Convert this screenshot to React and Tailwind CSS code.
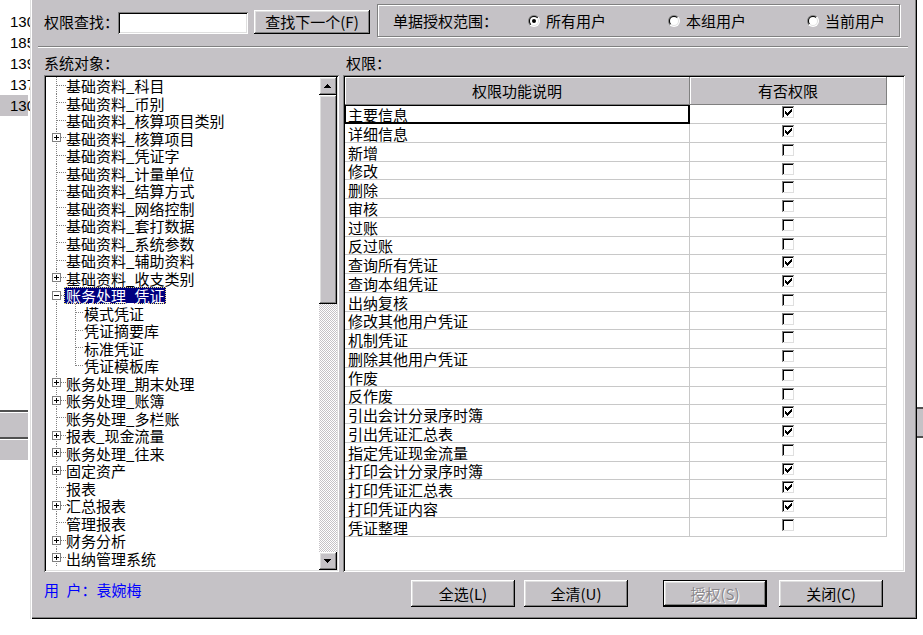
import React from 'react';

// Win98 style 3D edges
const raised = 'shadow-[inset_-1px_-1px_0_#000,inset_1px_1px_0_#fff,inset_-2px_-2px_0_#808080,inset_2px_2px_0_#dfdfdf]';
const raisedDefault = 'shadow-[inset_0_0_0_1px_#000,inset_-2px_-2px_0_#000,inset_2px_2px_0_#fff,inset_-3px_-3px_0_#808080,inset_3px_3px_0_#dfdfdf]';
const sunken = 'shadow-[inset_1px_1px_0_#808080,inset_-1px_-1px_0_#fff,inset_2px_2px_0_#000,inset_-2px_-2px_0_#dfdfdf]';

const tree = [
  { t: '基础资料_科目' },
  { t: '基础资料_币别' },
  { t: '基础资料_核算项目类别' },
  { t: '基础资料_核算项目', e: '+' },
  { t: '基础资料_凭证字' },
  { t: '基础资料_计量单位' },
  { t: '基础资料_结算方式' },
  { t: '基础资料_网络控制' },
  { t: '基础资料_套打数据' },
  { t: '基础资料_系统参数' },
  { t: '基础资料_辅助资料' },
  { t: '基础资料_收支类别', e: '+' },
  { t: '账务处理_凭证', e: '-', sel: true },
  { t: '模式凭证', child: true },
  { t: '凭证摘要库', child: true },
  { t: '标准凭证', child: true },
  { t: '凭证模板库', child: true, last: true },
  { t: '账务处理_期末处理', e: '+' },
  { t: '账务处理_账簿', e: '+' },
  { t: '账务处理_多栏账' },
  { t: '报表_现金流量', e: '+' },
  { t: '账务处理_往来', e: '+' },
  { t: '固定资产', e: '+' },
  { t: '报表' },
  { t: '汇总报表', e: '+' },
  { t: '管理报表' },
  { t: '财务分析', e: '+' },
  { t: '出纳管理系统', e: '+' },
];

const rights = [
  ['主要信息', true],
  ['详细信息', true],
  ['新增', false],
  ['修改', false],
  ['删除', false],
  ['审核', false],
  ['过账', false],
  ['反过账', false],
  ['查询所有凭证', true],
  ['查询本组凭证', true],
  ['出纳复核', false],
  ['修改其他用户凭证', false],
  ['机制凭证', false],
  ['删除其他用户凭证', false],
  ['作废', false],
  ['反作废', false],
  ['引出会计分录序时簿', true],
  ['引出凭证汇总表', true],
  ['指定凭证现金流量', false],
  ['打印会计分录序时簿', true],
  ['打印凭证汇总表', true],
  ['打印凭证内容', true],
  ['凭证整理', false],
];

const Radio = ({ id, checked }) => (
  <svg width="12" height="12" viewBox="0 0 12 12" className="shrink-0">
    <defs>
      <linearGradient id={`ro${id}`} x1="0" y1="0" x2="1" y2="1">
        <stop offset="0.5" stopColor="#808080" />
        <stop offset="0.5" stopColor="#ffffff" />
      </linearGradient>
      <linearGradient id={`ri${id}`} x1="0" y1="0" x2="1" y2="1">
        <stop offset="0.5" stopColor="#000000" />
        <stop offset="0.5" stopColor="#dfdfdf" />
      </linearGradient>
    </defs>
    <circle cx="6" cy="6" r="6" fill={`url(#ro${id})`} />
    <circle cx="6" cy="6" r="5" fill={`url(#ri${id})`} />
    <circle cx="6" cy="6" r="4" fill="#fff" />
    {checked && <circle cx="6" cy="6" r="2" fill="#000" />}
  </svg>
);

const Check = ({ checked }) => (
  <svg width="13" height="13" viewBox="0 0 13 13" shapeRendering="crispEdges">
    <rect x="0" y="0" width="13" height="13" fill="#fff" />
    <rect x="0" y="0" width="12" height="1" fill="#808080" />
    <rect x="0" y="0" width="1" height="12" fill="#808080" />
    <rect x="1" y="1" width="10" height="1" fill="#000" />
    <rect x="1" y="1" width="1" height="10" fill="#000" />
    <rect x="1" y="11" width="11" height="1" fill="#dfdfdf" />
    <rect x="11" y="1" width="1" height="11" fill="#dfdfdf" />
    {checked && (
      <path
        d="M9 3h1v1H9z M8 4h2v1H8z M3 5h1v1H3z M7 5h3v1H7z M3 6h2v1H3z M6 6h3v1H6z M3 7h5v1H3z M4 8h3v1H4z M5 9h1v1H5z"
        fill="#000"
      />
    )}
  </svg>
);

const Arrow = ({ up }) => (
  <svg width="18" height="18" viewBox="0 0 18 18" shapeRendering="crispEdges">
    <path
      d={up ? 'M8 7h1v1H8z M7 8h3v1H7z M6 9h5v1H6z M5 10h7v1H5z' : 'M5 7h7v1H5z M6 8h5v1H6z M7 9h3v1H7z M8 10h1v1H8z'}
      fill="#000"
    />
  </svg>
);

const Gutter = ({ item, h }) => {
  const dot = { stroke: '#808080', strokeDasharray: '1 1' };
  if (item.child) {
    return (
      <svg width="38" height={h} className="shrink-0" shapeRendering="crispEdges">
        <line x1="10.5" y1="0" x2="10.5" y2={h} {...dot} />
        <line x1="29.5" y1="0" x2="29.5" y2={item.last ? 9 : h} {...dot} />
        <line x1="30" y1="8.5" x2="38" y2="8.5" {...dot} />
      </svg>
    );
  }
  return (
    <svg width="20" height={h} className="shrink-0" shapeRendering="crispEdges">
      <line x1="10.5" y1="0" x2="10.5" y2={h} {...dot} />
      <line x1="11" y1="8.5" x2="20" y2="8.5" {...dot} />
      {item.e && (
        <>
          <rect x="6.5" y="4.5" width="8" height="8" fill="#fff" stroke="#808080" />
          <line x1="8" y1="8.5" x2="13" y2="8.5" stroke="#000" />
          {item.e === '+' && <line x1="10.5" y1="6" x2="10.5" y2="11" stroke="#000" />}
        </>
      )}
    </svg>
  );
};

const Btn = ({ children, className = '', disabled, isDefault }) => (
  <div
    className={`flex items-center justify-center bg-[#c5c2c6] leading-[16px] ${isDefault ? raisedDefault : raised} ${
      disabled ? 'text-[#8a878b] [text-shadow:1px_1px_0_#fff]' : 'text-black'
    } ${className}`}
  >
    {children}
  </div>
);

const LeftStrip = () => (
  <div className="w-[30px] h-[635px] shrink-0 bg-white overflow-hidden flex flex-col font-['Liberation_Sans',sans-serif] text-[15px]">
    <div className="h-[11px]" />
    {['130', '185', '139', '137', '130'].map((n, i) => (
      <div
        key={i}
        className={`h-[21px] leading-[21px] pl-[10px] whitespace-nowrap ${i === 4 ? 'bg-[#c5c2c6] w-[28px]' : ''}`}
      >
        {n}
      </div>
    ))}
    <div className="h-[294px]" />
    <div className="h-[27px] w-[28px] border-t-2 border-[#505050] bg-[#c5c2c6] shadow-[inset_0_1px_0_#fff]" />
    <div className="h-[23px] w-[28px] border-t-2 border-[#505050] bg-[#c5c2c6] shadow-[inset_0_1px_0_#fff]" />
  </div>
);

const RightStrip = () => (
  <div className="w-[6px] h-[635px] shrink-0 bg-white flex flex-col">
    <div className="h-[407px]" />
    <div className="h-[31px] border-t-2 border-b-2 border-[#505050] bg-[#c5c2c6]" />
  </div>
);

export default function App() {
  return (
    <div className="w-[923px] h-[635px] bg-white flex items-start overflow-hidden font-['Noto_Sans_CJK_SC','Liberation_Sans',sans-serif] text-[15px] text-black">
      <LeftStrip />
      <div className="w-[887px] h-[619px] shrink-0 bg-[#c5c2c6] shadow-[inset_1px_0_0_#dfdfdf,inset_2px_0_0_#fff,inset_-1px_-1px_0_#000,inset_-2px_-2px_0_#808080] flex flex-col pl-[14px] pr-[12px]">
        {/* search row */}
        <div className="flex items-start pt-[4px] h-[38px]">
          <div className="w-[74px] mt-[10px] leading-[16px] whitespace-nowrap">权限查找：</div>
          <div className={`w-[130px] h-[22px] mt-[8px] bg-white ${sunken}`} />
          <Btn className="ml-[6px] mt-[6px] w-[116px] h-[24px]">查找下一个(F)</Btn>
          <div className="ml-[7px] w-[523px] h-[33px] border border-[#808080] shadow-[1px_1px_0_#fff,inset_1px_1px_0_#fff] flex items-center pl-[15px] leading-[16px] whitespace-nowrap">
            <div className="w-[135px]">单据授权范围：</div>
            <div className="w-[140px] flex items-center gap-[6px]">
              <Radio id="a" checked />
              <span>所有用户</span>
            </div>
            <div className="w-[139px] flex items-center gap-[6px]">
              <Radio id="b" />
              <span>本组用户</span>
            </div>
            <div className="flex items-center gap-[6px]">
              <Radio id="c" />
              <span>当前用户</span>
            </div>
          </div>
        </div>

        {/* separator */}
        <div className="mt-[8px] -ml-[6px] -mr-[3px] h-[2px] border-t border-[#808080] border-b border-b-white" />

        {/* labels */}
        <div className="mt-[7px] h-[16px] leading-[16px] flex">
          <div className="w-[302px]">系统对象：</div>
          <div>权限：</div>
        </div>

        {/* main panes */}
        <div className="mt-[4px] h-[497px] flex">
          <div className={`w-[295px] h-[497px] p-[2px] bg-white flex ${sunken}`}>
            <div className="flex-1 overflow-hidden">
              {tree.map((item, i) => {
                const h = i % 2 ? 18 : 17;
                return (
                  <div key={i} className={`flex items-center whitespace-nowrap ${i % 2 ? 'h-[18px]' : 'h-[17px]'}`}>
                    <Gutter item={item} h={h} />
                    {item.sel ? (
                      <span className="-ml-[2px] px-[1px] h-[17px] leading-[15px] bg-[#000080] text-white border border-dotted border-[#e8e070]">
                        {item.t}
                      </span>
                    ) : (
                      <span className="leading-[17px]">{item.t}</span>
                    )}
                  </div>
                );
              })}
            </div>
            <div className="w-[18px] shrink-0 flex flex-col bg-[#c5c2c6]">
              <div className={`h-[18px] bg-[#c5c2c6] ${raised}`}>
                <Arrow up />
              </div>
              <div className={`h-[209px] bg-[#c5c2c6] ${raised}`} />
              <div className="flex-1 bg-[image:repeating-conic-gradient(#c5c2c6_0_25%,#ffffff_0_50%)] bg-[length:2px_2px]" />
              <div className={`h-[18px] bg-[#c5c2c6] ${raised}`}>
                <Arrow />
              </div>
            </div>
          </div>

          <div className={`ml-[4px] w-[562px] h-[497px] p-[2px] bg-white ${sunken}`}>
            <div className="w-[542px]">
              <div className="flex h-[28px] leading-[16px]">
                <div className="w-[345px] flex items-center justify-center bg-[#c5c2c6] border-r border-b border-[#808080] shadow-[inset_1px_1px_0_#fff]">
                  权限功能说明
                </div>
                <div className="w-[197px] flex items-center justify-center bg-[#c5c2c6] border-r border-b border-[#808080] shadow-[inset_1px_1px_0_#fff]">
                  有否权限
                </div>
              </div>
              {rights.map(([name, on], i) => (
                <div key={i} className={`flex ${i % 4 === 3 ? 'h-[18px]' : 'h-[19px]'}`}>
                  <div
                    className={`w-[345px] flex items-center pl-[3px] leading-[17px] border-r border-b whitespace-nowrap ${
                      i === 0 ? 'border-black shadow-[inset_1px_1px_0_#000,inset_-1px_-1px_0_#000]' : 'border-[#c8c8c8]'
                    }`}
                  >
                    {name}
                  </div>
                  <div className="w-[197px] flex justify-center items-start pt-[1px] border-r border-b border-[#c8c8c8]">
                    <Check checked={on} />
                  </div>
                </div>
              ))}
            </div>
          </div>
        </div>

        {/* bottom row */}
        <div className="mt-[8px] h-[27px] flex items-start">
          <div className="w-[367px] mt-[2px] leading-[16px] text-[#0000ff] whitespace-nowrap">用{'\u2002'}户：袁婉梅</div>
          <Btn className="w-[104px] h-[27px]">全选(L)</Btn>
          <Btn className="ml-[9px] w-[104px] h-[27px]">全清(U)</Btn>
          <Btn className="ml-[35px] w-[104px] h-[27px]" disabled isDefault>授权(S)</Btn>
          <Btn className="ml-[12px] w-[104px] h-[27px]">关闭(C)</Btn>
        </div>
      </div>
      <RightStrip />
    </div>
  );
}
